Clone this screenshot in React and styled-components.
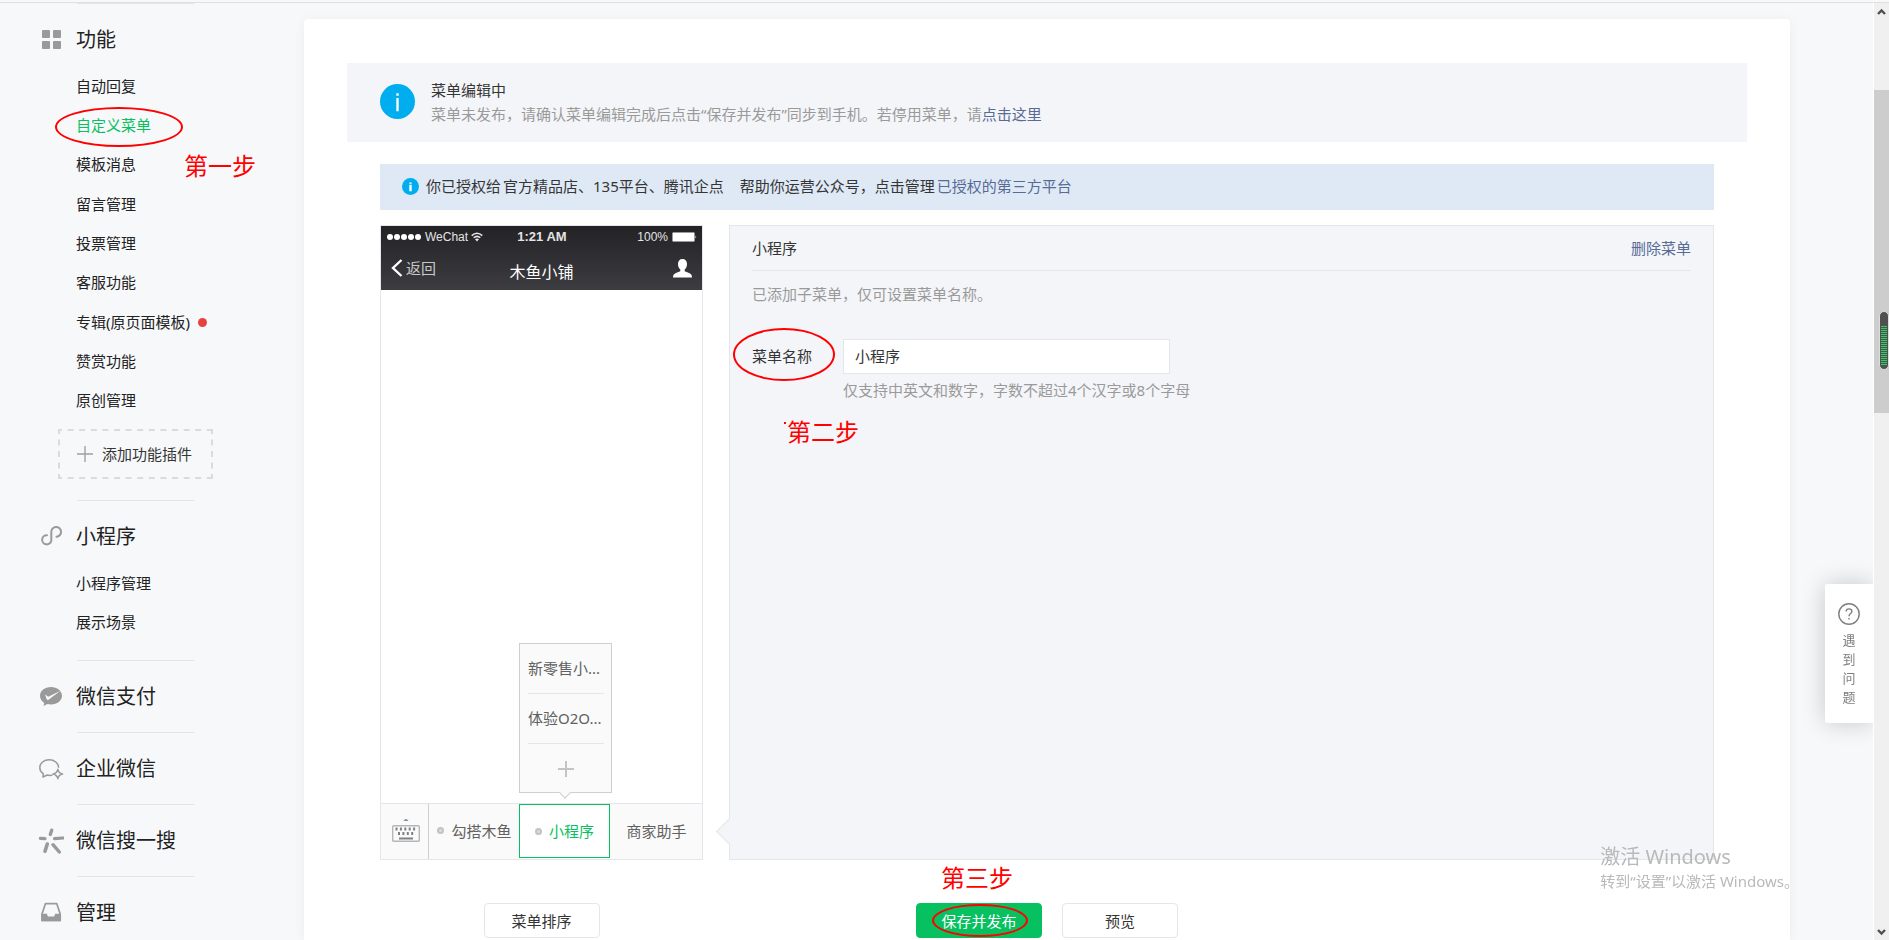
import React from "react";
import styled, { createGlobalStyle, css } from "styled-components";

const font = '"Noto Sans", "Noto Sans CJK SC", sans-serif';
const c = {
  page: "#f7f8fa",
  line: "#e4e6eb",
  text: "#353535",
  dark: "#222222",
  muted: "#9a9a9a",
  green: "#07c160",
  link: "#576b95",
  panel: "#f4f5f9",
  red: "#ff0000",
  icon: "#9a9a9a",
};

const GlobalStyle = createGlobalStyle`
  *, *::before, *::after { box-sizing: border-box; }
  body { margin: 0; background: ${c.page}; font: 15px/24px ${font}; color: ${c.text}; }
  button, input { font: inherit; color: inherit; }
  a { text-decoration: none; color: ${c.link}; }
  ul { list-style: none; margin: 0; padding: 0; }
  h1, h2, h3, p { margin: 0; font-weight: 400; font-size: inherit; }
  svg { display: block; }
`;

const Screen = styled.div`
  display: flex;
  flex-direction: column;
  height: 100vh;
`;
const TopEdge = styled.div`
  flex: none;
  height: 3px;
  border-bottom: 1px solid #dfe0e2;
`;
const Body = styled.div`
  flex: 1;
  min-height: 0;
  display: flex;
`;
const Content = styled.div`
  flex: 1;
  min-width: 0;
  display: flex;
  align-items: flex-start;
  padding-right: 83px;
  border-right: 1px solid #ffffff;
  overflow-y: auto;
  scrollbar-width: none;
`;

/* Sidebar */
const Sidebar = styled.nav`
  flex: none;
  width: 304px;
`;
const Section = styled.section`
  padding-bottom: ${(p) => p.$bottom || 20}px;
  &::before {
    content: "";
    display: block;
    width: 117px;
    height: 1px;
    margin-left: 77px;
    background: #e2e4e7;
  }
`;
const SectionHead = styled.h2`
  display: flex;
  align-items: center;
  padding: 21px 0 0 38px;
  font-size: 20px;
  line-height: 30px;
  color: ${c.dark};
  svg { flex: none; margin-right: 12px; }
`;
const Links = styled.ul`
  display: flex;
  flex-direction: column;
  height: ${(p) => p.$height}px;
  margin-top: 12px;
`;
const LinkRow = styled.li`
  position: relative;
  flex: 1;
  display: flex;
  align-items: center;
  padding: 0 0 2px 76px;
  a { color: ${(p) => (p.$active ? c.green : c.dark)}; }
`;
const NewDot = styled.span`
  width: 9px;
  height: 9px;
  margin: 2px 0 0 8px;
  border-radius: 50%;
  background: #e64340;
`;
const PluginBox = styled.div`
  position: relative;
  width: 213px;
  padding: 8px 0 0 58px;
  > svg { position: absolute; left: 58px; top: 8px; }
`;
const AddPlugin = styled.button`
  display: flex;
  align-items: center;
  gap: 9px;
  height: 50px;
  padding: 0 19px;
  border: 0;
  background: none;
  white-space: nowrap;
`;

/* Main column */
const Main = styled.main`
  flex: 1;
  min-width: 0;
  min-height: calc(100% - 16px);
  margin-top: 16px;
  padding: 44px 43px 2px;
  background: #ffffff;
  border-radius: 4px 4px 0 0;
  box-shadow: 0 1px 12px rgba(0, 0, 0, 0.05);
`;
const Notice = styled.section`
  display: flex;
  align-items: center;
  gap: 16px;
  height: 79px;
  padding: 0 33px;
  background: ${c.panel};
  svg { flex: none; margin-bottom: 3px; }
`;
const NoticeText = styled.div`
  padding-bottom: 2px;
  p { color: ${c.muted}; }
`;
const Inner = styled.div`
  padding: 22px 33px 0;
`;
const AuthBar = styled.p`
  display: flex;
  align-items: center;
  height: 46px;
  padding: 0 22px 2px;
  background: #dfe9f6;
  svg { flex: none; margin-right: 7px; }
  a { margin-left: 2px; }
`;
const Names = styled.span`
  margin: 0 16px 0 2px;
`;
const Editor = styled.div`
  display: flex;
  gap: 26px;
  min-height: 635px;
  margin-top: 15px;
`;

/* Phone preview */
const Phone = styled.section`
  flex: none;
  display: flex;
  flex-direction: column;
  width: 323px;
  border: 1px solid ${c.line};
`;
const PhoneHead = styled.header`
  height: 64px;
  background: linear-gradient(#232326, #3c3c41);
  color: #ffffff;
`;
const StatusBar = styled.div`
  display: grid;
  grid-template-columns: 1fr auto 1fr;
  align-items: center;
  height: 22px;
  padding: 0 5px 0 6px;
  font: 12px/22px "Liberation Sans", sans-serif;
  color: #e4e4e4;
  strong { font-size: 13px; }
`;
const StatusSide = styled.span`
  display: flex;
  align-items: center;
  gap: ${(p) => (p.$end ? 4 : 3)}px;
  justify-content: ${(p) => (p.$end ? "flex-end" : "flex-start")};
`;
const NavBar = styled.div`
  display: grid;
  grid-template-columns: 1fr auto 1fr;
  align-items: center;
  height: 40px;
  padding: 0 10px;
  > svg { justify-self: end; }
  h1 { padding-top: 8px; font-size: 16px; }
`;
const Back = styled.button`
  display: flex;
  align-items: center;
  gap: 3px;
  padding: 0;
  border: 0;
  background: none;
  color: #c8c8c8;
`;
const ChatArea = styled.div`
  flex: 1;
`;
const MenuBar = styled.div`
  display: flex;
  height: 56px;
  border-top: 1px solid ${c.line};
  background: #fafafa;
`;
const KeyboardCell = styled.div`
  flex: none;
  display: flex;
  align-items: center;
  justify-content: center;
  width: 48px;
  padding: 0 0 4px 2px;
  border-right: 1px solid #cfcfcf;
`;
const MenuCell = styled.div`
  position: relative;
  flex: 1;
  display: flex;
`;
const MenuButton = styled.button`
  flex: 1;
  display: flex;
  align-items: center;
  justify-content: center;
  gap: 7px;
  padding: 0 0 2px;
  border: 0;
  background: none;
  color: #616161;
  white-space: nowrap;
  ${(p) => p.$active && css`
    margin: 0 1px 1px -1px;
    padding: 0;
    border: 1px solid ${c.green};
    background: #ffffff;
    color: ${c.green};
  `}
`;
const MenuDot = styled.i`
  width: 7px;
  height: 7px;
  border: 2px solid #c2c2c2;
  border-radius: 50%;
  background: #dddddd;
`;
const SubMenu = styled.div`
  position: absolute;
  left: -1px;
  bottom: 66px;
  width: 93px;
  border: 1px solid #cfcfcf;
  background: #fafafa;
  &::after {
    content: "";
    position: absolute;
    left: 41px;
    bottom: -5px;
    width: 8px;
    height: 8px;
    border: solid #cfcfcf;
    border-width: 0 1px 1px 0;
    background: #fafafa;
    transform: rotate(45deg);
  }
`;
const SubItem = styled.button`
  display: flex;
  align-items: center;
  justify-content: ${(p) => (p.$center ? "center" : "flex-start")};
  width: 76px;
  height: ${(p) => (p.$center ? 48 : 50)}px;
  margin: 0 0 0 8px;
  padding: ${(p) => (p.$center ? "2px 0 0" : "0 0 2px")};
  border: 0;
  border-bottom: ${(p) => (p.$center ? "0" : `1px solid ${c.line}`)};
  background: none;
  color: #616161;
  white-space: nowrap;
`;

/* Settings panel */
const Settings = styled.section`
  position: relative;
  flex: 1;
  min-width: 0;
  padding: 0 22px;
  border: 1px solid ${c.line};
  background: ${c.panel};
  &::before {
    content: "";
    position: absolute;
    left: -10px;
    bottom: 18px;
    width: 19px;
    height: 19px;
    border: solid ${c.line};
    border-width: 0 0 1px 1px;
    background: ${c.panel};
    transform: rotate(45deg);
  }
`;
const SettingsHead = styled.header`
  display: flex;
  align-items: center;
  justify-content: space-between;
  height: 45px;
  border-bottom: 1px solid ${c.line};
`;
const Hint = styled.p`
  padding-top: ${(p) => p.$top}px;
  color: ${c.muted};
`;
const Field = styled.div`
  display: grid;
  grid-template-columns: 91px 327px;
  align-items: center;
  margin-top: 33px;
`;
const FieldLabel = styled.label`
  position: relative;
  padding-bottom: 2px;
`;
const NameInput = styled.input`
  height: 35px;
  padding: 0 11px 2px;
  border: 1px solid ${c.line};
  border-radius: 0;
  background: #ffffff;
  outline: 0;
`;
const FieldHint = styled(Hint)`
  margin-left: 91px;
`;

/* Footer actions */
const Actions = styled.footer`
  display: grid;
  grid-template-columns: 323px 1fr 323px;
  margin-top: 43px;
`;
const ActionGroup = styled.div`
  display: flex;
  justify-content: center;
  gap: 20px;
`;
const Action = styled.button`
  position: relative;
  width: ${(p) => (p.$primary ? 126 : 116)}px;
  height: 35px;
  padding: 0;
  border: 1px solid ${(p) => (p.$primary ? c.green : c.line)};
  border-radius: 4px;
  background: ${(p) => (p.$primary ? c.green : "#ffffff")};
  color: ${(p) => (p.$primary ? "#ffffff" : c.text)};
`;

/* Red tutorial marks */
const Ring = styled.span`
  position: absolute;
  left: ${(p) => p.$x}px;
  top: ${(p) => p.$y}px;
  width: ${(p) => p.$w}px;
  height: ${(p) => p.$h}px;
  border: 2px solid ${c.red};
  border-radius: 50%;
  pointer-events: none;
`;
const Step = styled.span`
  position: absolute;
  left: ${(p) => p.$x}px;
  top: ${(p) => p.$y}px;
  font-size: 24px;
  line-height: 32px;
  color: ${c.red};
  white-space: nowrap;
  pointer-events: none;
`;
const StepDot = styled.i`
  position: absolute;
  left: -3px;
  top: 6px;
  width: 2px;
  height: 2px;
  background: ${c.red};
`;

/* Floating pieces */
const Help = styled.button`
  position: fixed;
  right: 16px;
  bottom: 217px;
  display: flex;
  flex-direction: column;
  align-items: center;
  gap: 6px;
  width: 48px;
  height: 139px;
  padding: 19px 0 0;
  border: 0;
  border-radius: 2px 0 0 2px;
  background: #ffffff;
  box-shadow: 0 0 24px rgba(0, 0, 0, 0.2);
  clip-path: inset(-40px 0 -40px -40px);
  font-size: 13px;
  line-height: 19px;
  color: #7f7f7f;
  span { width: 13px; }
`;
const Watermark = styled.div`
  position: fixed;
  right: 90px;
  bottom: 47px;
  color: #b9b9b9;
  pointer-events: none;
  white-space: nowrap;
  p:first-child { font-size: 20px; line-height: 24px; }
`;
const ScrollTrack = styled.div`
  flex: none;
  position: relative;
  display: flex;
  flex-direction: column;
  align-items: center;
  width: 15px;
  padding: 5px 0 4px;
  background: #f0f0f0;
  > svg:last-of-type { margin-top: auto; }
`;
const Thumb = styled.div`
  align-self: stretch;
  height: 323px;
  margin-top: 74px;
  background: #cdcdcd;
`;
const Meter = styled.div`
  position: absolute;
  right: 0;
  top: 308px;
  width: 10px;
  height: 59px;
  padding: 14px 1px 3px;
  border: 1px solid #dddddd;
  border-radius: 5px;
  background: #505050;
  &::before {
    content: "";
    display: block;
    height: 100%;
    background: repeating-linear-gradient(#2fce62 0 1px, #505050 1px 2px);
  }
`;

const FunctionIcon = () => (
  <svg width="26" height="26" viewBox="0 0 26 26" fill={c.icon}>
    <rect x="4" y="3" width="8" height="8" rx="1" />
    <rect x="15" y="3" width="8" height="8" rx="1" />
    <rect x="4" y="14" width="8" height="8" rx="1" />
    <rect x="15" y="14" width="8" height="8" rx="1" />
  </svg>
);
const MiniIcon = () => (
  <svg width="26" height="26" viewBox="0 0 26 26" fill="none" stroke={c.icon} strokeWidth="2" strokeLinecap="round">
    <path d="M9 11.2A4.6 4.6 0 1 0 13.3 16.500V8.500A4.900 4.900 0 1 1 18.500 12.700" />
  </svg>
);
const PayIcon = () => (
  <svg width="26" height="26" viewBox="0 0 26 26">
    <path d="M13 3C6.8 3 2 6.9 2 11.8c0 3 1.600 5.500 4.200 7.100L5.500 22l4-1.900c1.100.3 2.300.4 3.500.4 6.200 0 11-3.900 11-8.700S19.200 3 13 3z" fill={c.icon} />
    <path d="M7 10.500l3.300 2.200L22.500 6.800 10.500 15.800c-.8.500-1.400.4-1.800-.5z" fill={c.page} />
  </svg>
);
const WorkIcon = () => (
  <svg width="26" height="26" viewBox="0 0 26 26" fill="none" stroke={c.icon} strokeWidth="1.500" strokeLinejoin="round">
    <path d="M14.600 18.900c-1.500.5-3.800.6-5.300.1L4.900 21l.4-3.300C3.100 16.200 1.800 13.900 1.800 11.700 1.800 7.200 6 3.700 11.200 3.700c5.100 0 9.300 3.400 9.400 8" />
    <path d="M19.800 13.300q.8 3.900 4.700 4.700-3.900.8-4.700 4.700-.8-3.900-4.700-4.700 3.900-.8 4.700-4.700z" />
  </svg>
);
const SearchIcon = () => (
  <svg width="26" height="26" viewBox="0 0 26 26" stroke={c.icon} strokeLinecap="round">
    <path d="M13.700 2.200L12.300 6.500" strokeWidth="3.400" />
    <path d="M2.400 10.400L7 10.700" strokeWidth="3.200" />
    <path d="M16.500 10.600L25.200 10" strokeWidth="3.200" />
    <path d="M9.300 16L7 23.200" strokeWidth="3.600" />
    <path d="M15 16.700L21.300 24" strokeWidth="3.400" />
  </svg>
);
const ManageIcon = () => (
  <svg width="26" height="26" viewBox="0 0 26 26">
    <path d="M7.500 3.600h11.200L22.200 14v6.500H4V14z" fill="none" stroke={c.icon} strokeWidth="1.700" strokeLinejoin="round" />
    <path d="M3.500 13.800H9c.2 2 1 2.800 2.200 2.800h3.700c1.200 0 2-.8 2.200-2.800h5.500v7.500H3.500z" fill={c.icon} />
  </svg>
);
const InfoIcon = ({ size, weight }) => (
  <svg width={size} height={size} viewBox="0 0 36 36">
    <circle cx="18" cy="18" r="18" fill="#00aeef" />
    <path d="M18 9.500v2.500M18 14.500v13.500" stroke="#ffffff" strokeWidth={weight} />
  </svg>
);
const Signal = () => (
  <svg width="35" height="12" viewBox="0 0 35 12" fill="#ffffff">
    {[3, 10, 17, 24, 31].map((x) => <circle key={x} cx={x} cy="6" r="3" />)}
  </svg>
);
const Wifi = () => (
  <svg width="12" height="10" viewBox="0 0 12 10" fill="none" stroke="#e8e8e8" strokeWidth="1.500">
    <path d="M.7 3.600Q6-1.200 11.300 3.600M2.700 5.800Q6 3 9.300 5.800" />
    <path d="M4 7.200Q6 5.800 8 7.200L6 9.500z" fill="#e8e8e8" stroke="none" />
  </svg>
);
const Battery = () => (
  <svg width="25" height="11" viewBox="0 0 25 11">
    <rect x="0.500" y="0.500" width="22" height="9" rx="1" fill="#ffffff" stroke="#9a9a9a" />
    <path d="M23.500 3.500q1.500 1.500 0 3z" fill="#ffffff" />
  </svg>
);
const Person = () => (
  <svg width="19" height="19" viewBox="0 0 19 19" fill="#ffffff">
    <path d="M9.500 0c2.900 0 4.500 2.100 4.500 5 0 2.300-.9 4.400-2.300 5.600v1.700c2.600 1.200 5.200 1.800 6.300 3 .7.800 1 2 1 3.200H0c0-1.200.3-2.400 1-3.200 1.100-1.200 3.700-1.800 6.300-3v-1.700C5.900 9.400 5 7.300 5 5c0-2.900 1.600-5 4.500-5z" />
  </svg>
);
const Keyboard = () => (
  <svg width="28" height="24" viewBox="0 0 28 24">
    <path d="M11.500 3q2.500-4 5 0z" fill="#8a8d90" />
    <rect x="0.700" y="7.700" width="26.600" height="15.600" rx="1" fill="none" stroke="#b4b6b8" strokeWidth="1.400" />
    <path d="M3.500 11h21" stroke="#7d8186" strokeWidth="3" strokeDasharray="2 2.400" />
    <path d="M6 15.500h17" stroke="#7d8186" strokeWidth="3" strokeDasharray="2 2.400" />
    <path d="M7 20.500h14" stroke="#7d8186" strokeWidth="2" />
  </svg>
);
const Plus = ({ width, color }) => (
  <svg width="16" height="16" viewBox="0 0 16 16">
    <path d="M8 0v16M0 8h16" stroke={color} strokeWidth={width} />
  </svg>
);
const Question = () => (
  <svg width="22" height="22" viewBox="0 0 22 22" fill="none" stroke="#7f7f7f">
    <circle cx="11" cy="11" r="10.200" strokeWidth="1.400" />
    <path d="M8.100 8.600c0-1.700 1.200-2.700 2.900-2.700s2.900 1 2.900 2.500c0 2.100-2.900 2.200-2.900 4.800M11 15v1.500" strokeWidth="1.400" />
  </svg>
);
const Caret = ({ d }) => (
  <svg width="9" height="8" viewBox="0 0 9 8" fill="none" stroke="#505050" strokeWidth="2.400">
    <path d={d} />
  </svg>
);

const features = ["自动回复", "自定义菜单", "模板消息", "留言管理", "投票管理", "客服功能", "专辑(原页面模板)", "赞赏功能", "原创管理"];
const plainSections = [
  ["微信支付", PayIcon],
  ["企业微信", WorkIcon],
  ["微信搜一搜", SearchIcon],
  ["管理", ManageIcon],
];

function SideNav() {
  return (
    <Sidebar>
      <Section $bottom={21}>
        <SectionHead><FunctionIcon />功能</SectionHead>
        <Links $height={354}>
          {features.map((name, i) => (
            <LinkRow key={name} $active={i === 1}>
              <a href="#">{name}</a>
              {i === 6 && <NewDot />}
              {i === 1 && <Ring $x={55} $y={1} $w={128} $h={40} />}
              {i === 2 && <Step $x={184} $y={4}>第一步</Step>}
            </LinkRow>
          ))}
        </Links>
        <PluginBox>
          <svg width="155" height="50" viewBox="0 0 155 50" fill="none">
            <path d="M0 1H155M0 49H155" stroke="#dadbdd" strokeWidth="2" strokeDasharray="6 5.600" strokeDashoffset="2" />
            <path d="M1 0V50M154 0V50" stroke="#dadbdd" strokeWidth="2" strokeDasharray="6 5.500" strokeDashoffset="1" />
          </svg>
          <AddPlugin><Plus width={1.4} color="#a0a0a0" />添加功能插件</AddPlugin>
        </PluginBox>
      </Section>
      <Section $bottom={18}>
        <SectionHead><MiniIcon />小程序</SectionHead>
        <Links $height={78}>
          <LinkRow><a href="#">小程序管理</a></LinkRow>
          <LinkRow><a href="#">展示场景</a></LinkRow>
        </Links>
      </Section>
      {plainSections.map(([name, Icon]) => (
        <Section key={name}>
          <SectionHead><Icon />{name}</SectionHead>
        </Section>
      ))}
    </Sidebar>
  );
}

function PhonePreview() {
  return (
    <Phone>
      <PhoneHead>
        <StatusBar>
          <StatusSide><Signal />WeChat<Wifi /></StatusSide>
          <strong>1:21 AM</strong>
          <StatusSide $end>100%<Battery /></StatusSide>
        </StatusBar>
        <NavBar>
          <Back>
            <svg width="12" height="18" viewBox="0 0 12 18" fill="none" stroke="#ffffff" strokeWidth="2.400">
              <path d="M10.500 1L2 9l8.500 8" />
            </svg>
            返回
          </Back>
          <h1>木鱼小铺</h1>
          <Person />
        </NavBar>
      </PhoneHead>
      <ChatArea />
      <MenuBar>
        <KeyboardCell><Keyboard /></KeyboardCell>
        <MenuCell><MenuButton><MenuDot />勾搭木鱼</MenuButton></MenuCell>
        <MenuCell>
          <SubMenu>
            <SubItem>新零售小...</SubItem>
            <SubItem>体验O2O...</SubItem>
            <SubItem $center aria-label="添加"><Plus width={2} color="#c4c4c4" /></SubItem>
          </SubMenu>
          <MenuButton $active><MenuDot />小程序</MenuButton>
        </MenuCell>
        <MenuCell><MenuButton>商家助手</MenuButton></MenuCell>
      </MenuBar>
    </Phone>
  );
}

function MenuSettings() {
  return (
    <Settings>
      <SettingsHead>
        <h3>小程序</h3>
        <a href="#">删除菜单</a>
      </SettingsHead>
      <Hint $top={11}>已添加子菜单，仅可设置菜单名称。</Hint>
      <Field>
        <FieldLabel htmlFor="menu-name">
          菜单名称
          <Ring $x={-19} $y={-16} $w={102} $h={53} />
          <Step $x={35} $y={72}><StepDot />第二步</Step>
        </FieldLabel>
        <NameInput id="menu-name" defaultValue="小程序" />
      </Field>
      <FieldHint $top={4}>仅支持中英文和数字，字数不超过4个汉字或8个字母</FieldHint>
    </Settings>
  );
}

export default function App() {
  return (
    <Screen>
      <GlobalStyle />
      <TopEdge />
      <Body>
        <Content>
          <SideNav />
          <Main>
            <Notice>
              <InfoIcon size={35} weight={2.4} />
              <NoticeText>
                <h3>菜单编辑中</h3>
                <p>菜单未发布，请确认菜单编辑完成后点击“保存并发布”同步到手机。若停用菜单，请<a href="#">点击这里</a></p>
              </NoticeText>
            </Notice>
            <Inner>
              <AuthBar>
                <InfoIcon size={17} weight={5} />
                你已授权给<Names>官方精品店、135平台、腾讯企点</Names>
                帮助你运营公众号，点击管理<a href="#">已授权的第三方平台</a>
              </AuthBar>
              <Editor>
                <PhonePreview />
                <MenuSettings />
              </Editor>
              <Actions>
                <ActionGroup><Action>菜单排序</Action></ActionGroup>
                <ActionGroup>
                  <Action $primary>
                    保存并发布
                    <Ring $x={15} $y={0} $w={96} $h={33} />
                    <Step $x={24} $y={-42}>第三步</Step>
                  </Action>
                  <Action>预览</Action>
                </ActionGroup>
              </Actions>
            </Inner>
          </Main>
        </Content>
        <ScrollTrack>
          <Caret d="M1 6l3.500-3.500L8 6" />
          <Thumb />
          <Meter />
          <Caret d="M1 2l3.500 3.500L8 2" />
        </ScrollTrack>
      </Body>
      <Help><Question /><span>遇到问题</span></Help>
      <Watermark>
        <p>激活 Windows</p>
        <p>转到“设置”以激活 Windows。</p>
      </Watermark>
    </Screen>
  );
}
